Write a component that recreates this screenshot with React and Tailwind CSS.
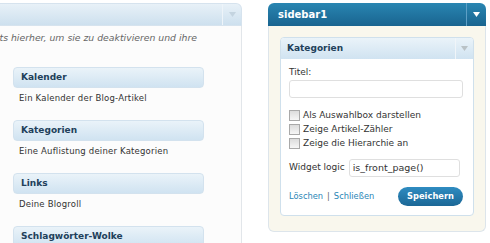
import React from 'react';

const widgets = [
    { title: 'Kalender', desc: 'Ein Kalender der Blog-Artikel' },
    { title: 'Kategorien', desc: 'Eine Auflistung deiner Kategorien' },
    { title: 'Links', desc: 'Deine Blogroll' },
    { title: 'Schlagwörter-Wolke', desc: 'Deine meistbenutzten Schlagwörter' },
];

function Arrow({ color }) {
    return (
        <svg width="7" height="5" viewBox="0 0 7 5">
            <path d="M0 0 L7 0 L3.5 5 Z" fill={color} />
        </svg>
    );
}

function Checkbox({ label }) {
    return (
        <label className="flex items-center h-[13.7px]">
            <span className="w-[11px] h-[11px] border border-[#a9a9a9] bg-gradient-to-b from-[#dcdcdc] to-[#f6f6f6] shrink-0" />
            <span className="ml-[3px] text-[9px] text-[#333] leading-none">{label}</span>
        </label>
    );
}

export default function App() {
    return (
        <div className="w-[490px] h-[243px] overflow-hidden bg-white flex pt-[3px] font-['DejaVu_Sans',sans-serif]">
            {/* Available widgets panel */}
            <div className="w-[242px] shrink-0 flex flex-col">
                <div className="h-[23px] shrink-0 flex rounded-tr-[6px] border border-l-0 border-[#d6e3ee] bg-gradient-to-b from-[#e8f1f8] to-[#cde0ee]">
                    <div className="flex-1" />
                    <div className="w-[19px] border-l border-[#eef4f9] flex items-center justify-center">
                        <Arrow color="#c4d4e0" />
                    </div>
                </div>
                <div className="flex-1 border-r border-[#e2e6ea] bg-[#fcfcfc]">
                    <div className="flex justify-end overflow-hidden whitespace-nowrap pr-[44px] pt-[6px]">
                        <p className="text-[9.3px] leading-[11px] italic text-[#666]">
                            Ziehe Widgets von der Sidebar rechts hierher, um sie zu deaktivieren und ihre
                        </p>
                    </div>
                    <div className="ml-[13px] w-[191px] mt-[24px]">
                        {widgets.map((w) => (
                            <div key={w.title} className="mb-[16px]">
                                <div className="h-[21px] flex items-center rounded-[4px] border border-[#d3e2ee] bg-gradient-to-b from-[#eaf3f9] to-[#d0e3f1] pl-[7px]">
                                    <span className="text-[9px] font-bold text-[#21405a]">{w.title}</span>
                                </div>
                                <p className="mt-[5px] pl-[6px] text-[8.5px] leading-[11px] tracking-[0.2px] text-[#333]">{w.desc}</p>
                            </div>
                        ))}
                    </div>
                </div>
            </div>

            {/* Sidebar panel */}
            <div className="ml-[26px] w-[218px] h-[229px] shrink-0 flex flex-col">
                <div className="h-[23px] shrink-0 flex rounded-t-[6px] bg-gradient-to-b from-[#2986b2] to-[#19648f]">
                    <div className="flex-1 flex items-center pl-[10px]">
                        <span className="text-[10px] font-bold text-white">sidebar1</span>
                    </div>
                    <div className="w-[20px] border-l border-[#5d9fc6] flex items-center justify-center">
                        <Arrow color="#ffffff" />
                    </div>
                </div>
                <div className="flex-1 bg-[#f9f7ed] border border-t-0 border-[#dde5eb] rounded-b-[6px] px-[11px] pt-[11px]">
                    <div className="rounded-[4px] border border-[#cfe0ec] bg-white">
                        <div className="h-[21px] flex rounded-t-[3px] bg-gradient-to-b from-[#eaf3f9] to-[#d0e3f1]">
                            <div className="flex-1 flex items-center pl-[6px]">
                                <span className="text-[9px] font-bold text-[#21405a]">Kategorien</span>
                            </div>
                            <div className="w-[18px] border-l border-[#f0f5f9] flex items-center justify-center">
                                <Arrow color="#b9c2c6" />
                            </div>
                        </div>
                        <div className="pl-[8px] pr-[10px] pt-[8px] pb-[9px]">
                            <p className="text-[9px] leading-[11px] text-[#333]">Titel:</p>
                            <div className="mt-[2px] h-[18px] rounded-[3px] border border-[#dfdfdf] bg-white" />
                            <div className="mt-[11px] flex flex-col">
                                <Checkbox label="Als Auswahlbox darstellen" />
                                <Checkbox label="Zeige Artikel-Zähler" />
                                <Checkbox label="Zeige die Hierarchie an" />
                            </div>
                            <div className="mt-[9px] flex items-center">
                                <span className="text-[9px] text-[#333]">Widget logic</span>
                                <div className="ml-[4px] w-[111px] h-[18px] rounded-[3px] border border-[#dfdfdf] bg-white flex items-center pl-[3px]">
                                    <span className="text-[9.5px] text-[#333]">is_front_page()</span>
                                </div>
                            </div>
                            <div className="mt-[10px] flex items-center">
                                <span className="text-[8.3px] text-[#2a86b6]">Löschen</span>
                                <span className="mx-[4px] text-[8.3px] text-[#666]">|</span>
                                <span className="text-[8.3px] text-[#2a86b6]">Schließen</span>
                                <button className="ml-auto w-[65px] h-[19px] rounded-full bg-gradient-to-b from-[#2f8cc1] to-[#1b6796] text-white text-[8.3px] font-bold">
                                    Speichern
                                </button>
                            </div>
                        </div>
                    </div>
                </div>
            </div>
        </div>
    );
}
